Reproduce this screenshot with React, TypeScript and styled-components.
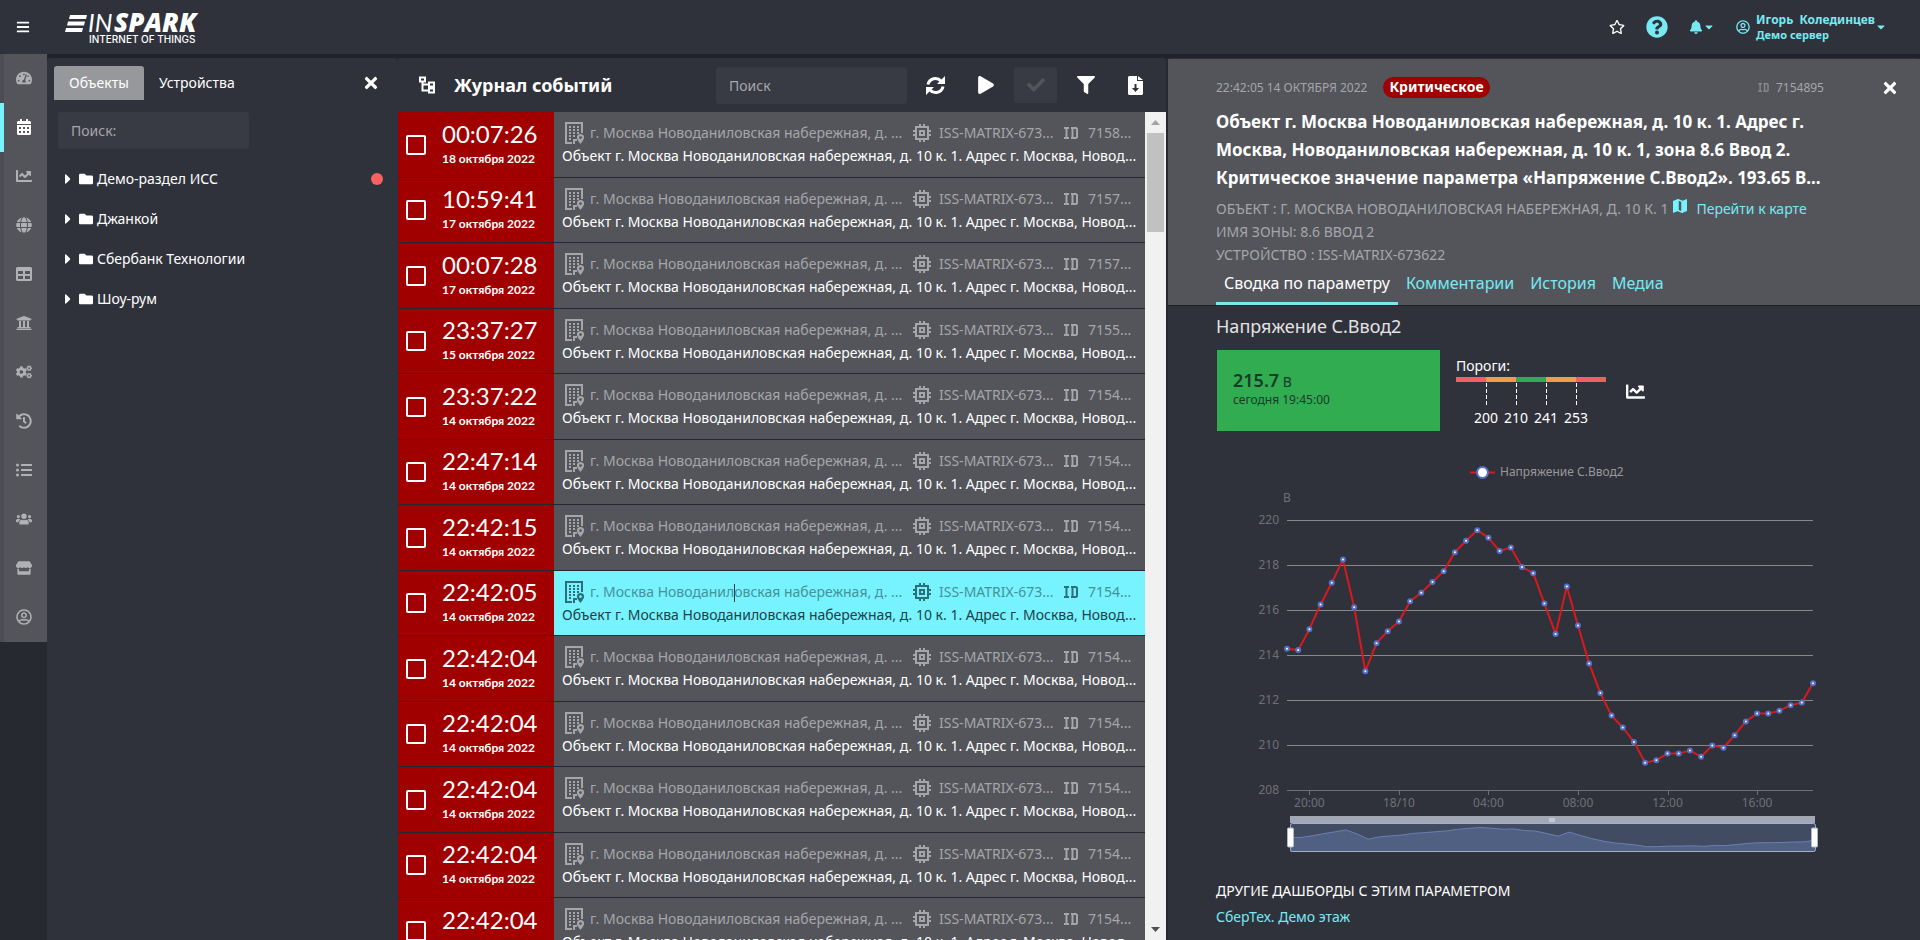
import React from "react";
import styled, { createGlobalStyle, css } from "styled-components";
import {
  FaBars, FaBell, FaCalendarAlt, FaCaretDown, FaCaretRight, FaChartLine, FaCheck, FaCogs, FaFilter, FaFolder,
  FaGlobe, FaHistory, FaListUl, FaPlay, FaQuestionCircle, FaRegStar, FaRegUserCircle, FaStore,
  FaTable, FaTachometerAlt, FaTimes, FaUniversity, FaUsers,
} from "react-icons/fa";

const color = {
  page: "#272930",
  panel: "#30323b",
  line: "#21222b",
  raised: "#53555b",
  field: "#393b44",
  muted: "#a5a6a9",
  accent: "#76e9f2",
  alarm: "#a00000",
};

const Global = createGlobalStyle`
  *, *::before, *::after { box-sizing: border-box; }
  html, body, #root { height: 100%; }
  body {
    margin: 0;
    overflow: hidden;
    background: ${color.page};
    color: #fff;
    font: 14px/20px "Noto Sans", "Open Sans", sans-serif;
  }
  button, input { font: inherit; color: inherit; }
  button { padding: 0; border: 0; background: none; cursor: pointer; }
  a { color: ${color.accent}; text-decoration: none; }
  h1, h2, h3, p, ul { margin: 0; padding: 0; }
  ul { list-style: none; }
  svg { display: block; flex: none; }
`;

const Shell = styled.div`
  display: flex;
  flex-direction: column;
  height: 100%;
`;

const TopBar = styled.header`
  display: flex;
  align-items: center;
  flex: none;
  height: 54px;
  padding: 0 33px 0 16px;
  background: ${color.panel};
`;

const Burger = styled.button`
  display: flex;
  width: 49px;
`;

const TopActions = styled.nav`
  display: flex;
  align-items: center;
  margin-left: auto;
  color: ${color.accent};
`;

const TopButton = styled.button<{ $light?: boolean }>`
  display: flex;
  align-items: center;
  margin-right: 21px;
  color: ${(p) => (p.$light ? "#fff" : "inherit")};
`;

const UserButton = styled.button`
  display: flex;
  align-items: center;
  text-align: left;
`;

const UserText = styled.span`
  margin-left: 6px;
`;

const UserName = styled.span`
  display: block;
  font: 700 12px/15px "Noto Sans", sans-serif;
  white-space: pre;
`;

const ServerName = styled.small`
  display: block;
  font: 700 11px/16px "Noto Sans", sans-serif;
`;

const Columns = styled.div`
  display: grid;
  grid-template-columns: 47px 350px minmax(0, 769fr) 2px minmax(0, 752fr);
  flex: 1;
  min-height: 0;
  background: linear-gradient(${color.line} 4px, ${color.page} 4px);
`;

const Rail = styled.nav`
  align-self: start;
  border-left: 4px solid #4b4d54;
  background: ${color.raised};
`;

const RailButton = styled.button<{ $active?: boolean }>`
  display: flex;
  align-items: center;
  width: 47px;
  height: 49px;
  margin-left: -4px;
  padding: 0 0 2px 12px;
  border-left: 4px solid ${(p) => (p.$active ? "#77f3ff" : "transparent")};
  color: ${(p) => (p.$active ? "#fff" : "#b0b1b4")};
  svg { width: auto; height: 16px; }
`;

const Panel = styled.section`
  display: flex;
  flex-direction: column;
  min-width: 0;
  min-height: 0;
  margin-top: 4px;
  border-radius: 4px 4px 0 0;
  background: ${color.panel};
`;

const TabBar = styled.div`
  display: flex;
  align-items: center;
  padding: 8px 17px 0 7px;
`;

const ObjectTab = styled.button<{ $active?: boolean }>`
  height: 34px;
  padding: 0 15px;
  border-radius: 3px 3px 0 0;
  background: ${(p) => (p.$active ? "#97989c" : "transparent")};
`;

const CloseButton = styled.button`
  display: flex;
  margin-left: auto;
`;

const SearchInput = styled.input`
  width: 191px;
  height: 37px;
  padding: 0 13px;
  border: 0;
  border-radius: 3px;
  background: ${color.field};
  &::placeholder { color: ${color.muted}; opacity: 1; }
`;

const TreeSearch = styled.div`
  padding: 12px 11px 10px;
`;

const TreeItem = styled.li`
  display: flex;
  align-items: center;
  height: 40px;
  padding: 0 14px 0 18px;
`;

const TreeToggle = styled.button`
  display: flex;
  align-items: center;
  gap: 4px;
`;

const Caret = styled(FaCaretRight)`
  width: 6px;
  height: 16px;
  margin-right: 4px;
`;

const AlarmDot = styled.span`
  width: 12px;
  height: 12px;
  margin-left: auto;
  border-radius: 50%;
  background: #f96060;
`;

const JournalHeader = styled.header`
  display: flex;
  align-items: center;
  height: 54px;
  flex: none;
  padding: 0 9px 0 22px;
`;

const JournalTitle = styled.h1`
  flex: 1;
  margin-left: 19px;
  font-size: 18px;
  line-height: 26px;
  white-space: nowrap;
`;

const Tools = styled.div`
  display: flex;
  align-items: center;
  gap: 7px;
  margin-left: 7px;
`;

const ToolButton = styled.button<{ $off?: boolean }>`
  display: flex;
  align-items: center;
  justify-content: center;
  width: 43px;
  height: 36px;
  border-radius: 3px;
  color: ${(p) => (p.$off ? "#53555d" : "#fff")};
  background: ${(p) => (p.$off ? color.field : "transparent")};
`;

const JournalBody = styled.div`
  display: flex;
  flex: 1;
  min-height: 0;
`;

const EventList = styled.ul`
  flex: 1;
  min-width: 0;
  overflow: hidden;
  padding-left: 1px;
`;

const EventRow = styled.li<{ $selected?: boolean }>`
  display: flex;
  height: 65px;
  border-bottom: 1px solid #26272f;
  background: ${(p) => (p.$selected ? "#77f3ff" : color.raised)};
  color: ${(p) => (p.$selected ? "#1c4248" : "#fff")};
  --soft: ${(p) => (p.$selected ? "#469298" : "#a5a6a9")};
  --icon: ${(p) => (p.$selected ? "#2e6f77" : "#a5a6a9")};
  &:nth-child(odd) { height: 66px; }
`;

const Stamp = styled.label`
  display: flex;
  align-items: center;
  flex: none;
  width: 156px;
  padding-left: 8px;
  background: ${color.alarm};
  color: #fff;
`;

const Check = styled.input`
  appearance: none;
  flex: none;
  width: 20px;
  height: 20px;
  margin: 0 16px 0 0;
  border: 2px solid #fff;
  border-radius: 2px;
`;

const Clock = styled.time`
  display: block;
  font: 24px/28px Lato, sans-serif;
`;

const Day = styled.span`
  display: block;
  font: 700 12px/22px Lato, sans-serif;
  white-space: nowrap;
`;

const Summary = styled.div`
  flex: 1;
  min-width: 0;
  padding: 9px 8px 0;
`;

const Facts = styled.div`
  display: flex;
  align-items: center;
  height: 24px;
  padding-left: 3px;
  color: var(--soft);
  svg { color: var(--icon); }
`;

const ellipsis = css`
  overflow: hidden;
  text-overflow: ellipsis;
  white-space: nowrap;
`;

const Place = styled.span`
  flex: 1;
  min-width: 0;
  margin: 0 8px 0 5px;
  ${ellipsis}
`;

const Device = styled.span`
  flex: none;
  width: 118px;
  margin: 0 7px 0 8px;
  ${ellipsis}
`;

const EventId = styled.span`
  flex: none;
  width: 49px;
  margin-left: 10px;
`;

const Message = styled.p`
  line-height: 22px;
  ${ellipsis}
`;

const TextCursor = styled.i`
  display: inline-block;
  width: 1px;
  height: 18px;
  margin-right: -1px;
  background: #1c4248;
  vertical-align: middle;
`;

const ScrollTrack = styled.div`
  display: flex;
  flex-direction: column;
  align-items: center;
  flex: none;
  width: 21px;
  background: #f1f1f1;
`;

const ScrollArrow = styled.button`
  display: flex;
  align-items: center;
  justify-content: center;
  flex: none;
  width: 21px;
  height: 21px;
`;

const ScrollThumb = styled.div`
  width: 17px;
  height: 99px;
  margin-bottom: auto;
  background: #c1c1c1;
`;

const DetailHead = styled.header`
  margin-top: 1px;
  padding: 18px 21px 0 48px;
  background: ${color.raised};
  border-bottom: 1px solid #1f2028;
`;

const DetailTop = styled.div`
  display: flex;
  align-items: center;
  height: 21px;
  font-size: 12px;
  color: ${color.muted};
  svg { color: #85868b; }
`;

const Badge = styled.strong`
  height: 21px;
  margin: 0 auto 0 16px;
  padding: 0 6px;
  border-radius: 11px;
  background: ${color.alarm};
  color: #fff;
  font-size: 14px;
  line-height: 20px;
`;

const DetailId = styled.span`
  display: flex;
  align-items: center;
  gap: 7px;
  margin-right: 57px;
`;

const DetailClose = styled.button`
  display: flex;
  svg { color: #fff; }
`;

const DetailTitle = styled.h2`
  margin: 10px 70px 5px 0;
  font-size: 17px;
  line-height: 28px;
`;

const Meta = styled.p`
  display: flex;
  line-height: 23px;
  color: ${color.muted};
  white-space: nowrap;
`;

const MapLink = styled.a`
  display: flex;
  gap: 9px;
  margin-left: 5px;
  svg { margin-top: 2px; }
`;

const DetailTabs = styled.nav`
  display: flex;
`;

const DetailTab = styled.a<{ $active?: boolean }>`
  height: 39px;
  padding: 5px 8px 0;
  border-bottom: 3px solid ${(p) => (p.$active ? "#77e9f2" : "transparent")};
  font-size: 16px;
  line-height: 24px;
  color: ${(p) => (p.$active ? "#fff" : color.accent)};
`;

const DetailBody = styled.div`
  flex: 1;
  min-height: 0;
  margin-bottom: 2px;
  padding: 7px 96px 0 48px;
  overflow: hidden;
`;

const ParamTitle = styled.h3`
  font-weight: 400;
  font-size: 18px;
  line-height: 26px;
  color: #e2e2e4;
`;

const Reading = styled.div`
  display: flex;
  margin: 11px 0 30px 1px;
`;

const ValueCard = styled.div`
  display: flex;
  flex-direction: column;
  justify-content: center;
  width: 223px;
  height: 81px;
  padding: 0 0 4px 16px;
  background: #32ac51;
  color: #183a2b;
  font-size: 12px;
  line-height: 16px;
`;

const Value = styled.span`
  font-size: 14px;
  line-height: 20px;
  strong { font-size: 18px; font-weight: 600; }
`;

const Limits = styled.div`
  margin: 6px 20px 0 16px;
`;

const LimitBar = styled.div`
  display: flex;
  width: 150px;
  margin-top: 1px;
`;

const Segment = styled.span<{ $tone: string }>`
  width: 30px;
  height: 30px;
  border-top: 5px solid ${(p) => p.$tone};
  & + & { background: repeating-linear-gradient(#fff 0 4px, transparent 4px 6px) left / 1px 100% no-repeat border-box; }
`;

const LimitLabels = styled.div`
  display: flex;
  padding: 1px 0 0 15px;
  span { width: 30px; text-align: center; }
`;

const ChartButton = styled.button`
  align-self: flex-start;
  margin-top: 32px;
`;

const Chart = styled.svg`
  width: 100%;
  height: auto;
  font: 12px "Noto Sans", sans-serif;
  fill: #6e7079;
`;

const Related = styled.section`
  h3 { margin-top: 23px; font-weight: 400; font-size: 14px; line-height: 26px; }
  a { display: block; line-height: 26px; }
`;

const Logo = () => (
  <svg width="140" height="44" viewBox="0 0 140 44" role="img" aria-label="INSPARK Internet of Things" fill="#fff">
    <path d="M5 10h17l-1 4H4zM3 16.500h17l-1 4H2zM1 23h17l-1 4H0z" />
    <text x="23" y="27" fontFamily="Lato" fontSize="25" fontStyle="italic" fontWeight="400">IN</text>
    <text x="49" y="27" fontFamily="Open Sans" fontSize="26" fontStyle="italic" fontWeight="800">SPARK</text>
    <text x="24" y="38" fontFamily="Inter" fontSize="10" fontWeight="500">INTERNET OF THINGS</text>
  </svg>
);

const TreeIcon = () => (
  <svg width="16" height="18" viewBox="0 0 16 18" fill="none" stroke="#fff" strokeWidth="2">
    <path d="M1 1.500h5v4H1zM10 6.500h5v4h-5zM10 12.500h5v4h-5zM3.500 5.500v9H10M3.500 8.500H10" />
  </svg>
);

const BuildingIcon = () => (
  <svg width="20" height="22" viewBox="0 0 20 22" fill="currentColor">
    <path d="M0 0h18v11h-2V2H2v18h5v2H0zM8 17h4v2h-2v3H8z" />
    <path d="M4 4h2v2H4zM8 4h2v2H8zM12 4h2v2h-2zM4 7h2v2H4zM8 7h2v2H8zM12 7h2v2h-2zM4 10h2v2H4zM8 10h2v2H8zM4 13h2v2H4zM8 13h2v2H8zM4 16h2v2H4zM12 10h2v2h-2z" />
    <path fillRule="evenodd" d="M15.500 12a3.600 3.600 0 0 1 3.600 3.600c0 2.500-3.600 6.400-3.600 6.400s-3.600-3.900-3.600-6.400A3.600 3.600 0 0 1 15.500 12zm0 2.200a1.400 1.400 0 1 0 0 2.800 1.400 1.400 0 0 0 0-2.800z" />
  </svg>
);

const ChipIcon = () => (
  <svg width="18" height="18" viewBox="0 0 18 18" fill="none" stroke="currentColor" strokeWidth="2">
    <path d="M3 3h12v12H3zM7 7h4v4H7zM7 0v3M11 0v3M7 15v3M11 15v3M0 7h3M0 11h3M15 7h3M15 11h3" />
  </svg>
);

const IdIcon = ({ size = 14 }: { size?: number }) => (
  <svg width={size} height={size === 14 ? 12 : 9} viewBox="0 0 14 12" fill="none" stroke="currentColor" strokeWidth="2">
    <path d="M0 1h5M2.500 1v10M0 11h5M7 1h5l1 1v8l-1 1H7M8.500 1v10" />
  </svg>
);

const MapIcon = () => (
  <svg width="14" height="14" viewBox="0 0 14 14" fill="#77f3ff">
    <path d="M0 2l5-2v12l-5 2zM9 2l5-2v12l-5 2z" />
    <path d="M5 .700l4 1.500v11L5 11.500z" fill="none" stroke="#77f3ff" strokeWidth="1.500" />
  </svg>
);

const RefreshIcon = () => (
  <svg width="19" height="19" viewBox="0 0 19 19" fill="none" stroke="#fff" strokeWidth="3">
    <path d="M2 8.500a7.500 7.500 0 0 1 13-3.500M17 10.500a7.500 7.500 0 0 1-13 3.500" />
    <path d="M19 0v8h-8zM0 19v-8h8z" fill="#fff" stroke="none" />
  </svg>
);

const DownloadIcon = () => (
  <svg width="15" height="19" viewBox="0 0 15 19" fill="#fff">
    <path fillRule="evenodd" d="M1 0h8v5h6v13l-1 1H1l-1-1V1zM6.500 8v4H4l3.500 4 3.500-4H8.500V8z" />
    <path d="M10 0l5 4h-5z" />
  </svg>
);

const railItems = [
  { name: "Панель", icon: FaTachometerAlt },
  { name: "Журнал", icon: FaCalendarAlt },
  { name: "Графики", icon: FaChartLine },
  { name: "Карта", icon: FaGlobe },
  { name: "Таблица", icon: FaTable },
  { name: "Организации", icon: FaUniversity },
  { name: "Настройки", icon: FaCogs },
  { name: "История", icon: FaHistory },
  { name: "Список", icon: FaListUl },
  { name: "Пользователи", icon: FaUsers },
  { name: "Магазин", icon: FaStore },
  { name: "Профиль", icon: FaRegUserCircle },
];

const treeItems = [
  { name: "Демо-раздел ИСС", alarm: true },
  { name: "Джанкой" },
  { name: "Сбербанк Технологии" },
  { name: "Шоу-рум" },
];

const events = [
  { time: "00:07:26", day: "18 октября 2022", id: "7158..." },
  { time: "10:59:41", day: "17 октября 2022", id: "7157..." },
  { time: "00:07:28", day: "17 октября 2022", id: "7157..." },
  { time: "23:37:27", day: "15 октября 2022", id: "7155..." },
  { time: "23:37:22", day: "14 октября 2022", id: "7154..." },
  { time: "22:47:14", day: "14 октября 2022", id: "7154..." },
  { time: "22:42:15", day: "14 октября 2022", id: "7154..." },
  { time: "22:42:05", day: "14 октября 2022", id: "7154...", selected: true },
  { time: "22:42:04", day: "14 октября 2022", id: "7154..." },
  { time: "22:42:04", day: "14 октября 2022", id: "7154..." },
  { time: "22:42:04", day: "14 октября 2022", id: "7154..." },
  { time: "22:42:04", day: "14 октября 2022", id: "7154..." },
  { time: "22:42:04", day: "14 октября 2022", id: "7154..." },
];

const limitTones = ["#f65f5f", "#ef9c4b", "#32ac51", "#ef9c4b", "#f65f5f"];
const limits = [200, 210, 241, 253];

const readings = [
  214.3, 214.24, 215.17, 216.27, 217.23, 218.27, 216.15, 213.3, 214.55, 215.08, 215.51, 216.41, 216.79, 217.27,
  217.75, 218.59, 219.1, 219.57, 219.23, 218.64, 218.8, 217.93, 217.66, 216.31, 214.96, 217.07, 215.33, 213.64,
  212.33, 211.33, 210.8, 210.16, 209.23, 209.35, 209.64, 209.64, 209.78, 209.5, 210, 209.9, 210.46, 211.07,
  211.42, 211.42, 211.54, 211.79, 211.91, 212.77,
];
const timeTicks = ["20:00", "18/10", "04:00", "08:00", "12:00", "16:00"];

const plotX = (i: number) => 71 + (i * 526) / (readings.length - 1);
const plotY = (v: number) => 59.5 + (220 - v) * 22.5;
const miniX = (i: number) => 74 + (i * 525) / (readings.length - 1);
const miniY = (v: number) => 366.5 + (219.57 - v) * 1.87;

const VoltageChart = () => {
  const line = readings.map((v, i) => `${plotX(i)},${plotY(v)}`).join(" ");
  const mini = readings.map((v, i) => `${miniX(i)},${miniY(v)}`).join(" ");
  return (
    <Chart viewBox="0 0 608 394" role="img" aria-label="Напряжение С.Ввод2">
      <path d="M254 11.500h25" stroke="#d8191e" strokeWidth="2" />
      <circle cx="266.500" cy="11.500" r="5.500" fill="#fff" stroke="#5470c6" strokeWidth="2" />
      <text x="284" y="15" fill="#97989c">Напряжение С.Ввод2</text>
      <text x="71" y="41" textAnchor="middle">В</text>
      {[220, 218, 216, 214, 212, 210, 208].map((v) => (
        <g key={v}>
          <path d={`M71 ${plotY(v)}H597`} stroke={v === 208 ? "#6e7079" : "#85878b"} />
          <text x="63" y={plotY(v) + 3} textAnchor="end">{v}</text>
        </g>
      ))}
      {timeTicks.map((t, i) => (
        <g key={t}>
          <path d={`M${Math.round(plotX(2 + i * 8)) + 0.5} 330v4`} stroke="#6e7079" />
          <text x={plotX(2 + i * 8)} y="346" textAnchor="middle">{t}</text>
        </g>
      ))}
      <polyline points={line} fill="none" stroke="#d8191e" strokeWidth="2" strokeLinejoin="bevel" />
      {readings.map((v, i) => (
        <circle key={i} cx={plotX(i)} cy={plotY(v)} r="2" fill="#fff" stroke="#5470c6" strokeWidth="2" />
      ))}
      <path d="M74 355h525v7H74z" fill="#a1a7b4" />
      <path d="M334 357v4M336 357v4M338 357v4" stroke="#e6e8ee" />
      <path d="M74 362h525v29H74z" fill="#414b62" />
      <polygon points={`74,391 ${mini} 599,391`} fill="#506083" />
      <polyline points={mini} fill="none" stroke="#6a7fb5" />
      <rect x="74.500" y="362.500" width="525" height="28" rx="2" fill="none" stroke="#a3b3cf" />
      <rect x="71.500" y="367" width="6" height="19" rx="1" fill="#fff" stroke="#acb8d1" />
      <rect x="595.500" y="367" width="6" height="19" rx="1" fill="#fff" stroke="#acb8d1" />
    </Chart>
  );
};

export default function App() {
  return (
    <Shell>
      <Global />
      <TopBar>
        <Burger aria-label="Меню"><FaBars size={14} /></Burger>
        <Logo />
        <TopActions>
          <TopButton $light aria-label="Избранное"><FaRegStar size={16} /></TopButton>
          <TopButton aria-label="Помощь"><FaQuestionCircle size={22} /></TopButton>
          <TopButton aria-label="Уведомления"><FaBell size={14} /><FaCaretDown size={12} /></TopButton>
          <UserButton>
            <FaRegUserCircle size={14} />
            <UserText>
              <UserName>{"Игорь  Колединцев"}</UserName>
              <ServerName>Демо сервер</ServerName>
            </UserText>
            <FaCaretDown size={12} />
          </UserButton>
        </TopActions>
      </TopBar>
      <Columns>
        <Rail>
          {railItems.map(({ name, icon: Icon }, i) => (
            <RailButton key={name} aria-label={name} $active={i === 1}><Icon /></RailButton>
          ))}
        </Rail>

        <Panel>
          <TabBar>
            <ObjectTab $active>Объекты</ObjectTab>
            <ObjectTab>Устройства</ObjectTab>
            <CloseButton aria-label="Закрыть"><FaTimes size={18} /></CloseButton>
          </TabBar>
          <TreeSearch>
            <SearchInput aria-label="Поиск объектов" placeholder="Поиск:" />
          </TreeSearch>
          <ul>
            {treeItems.map((item) => (
              <TreeItem key={item.name}>
                <TreeToggle><Caret /><FaFolder size={14} />{item.name}</TreeToggle>
                {item.alarm && <AlarmDot />}
              </TreeItem>
            ))}
          </ul>
        </Panel>

        <Panel>
          <JournalHeader>
            <TreeIcon />
            <JournalTitle>Журнал событий</JournalTitle>
            <SearchInput aria-label="Поиск событий" placeholder="Поиск" />
            <Tools>
              <ToolButton aria-label="Обновить"><RefreshIcon /></ToolButton>
              <ToolButton aria-label="Запустить"><FaPlay size={18} /></ToolButton>
              <ToolButton aria-label="Подтвердить" $off><FaCheck size={18} /></ToolButton>
              <ToolButton aria-label="Фильтр"><FaFilter size={18} /></ToolButton>
              <ToolButton aria-label="Скачать"><DownloadIcon /></ToolButton>
            </Tools>
          </JournalHeader>
          <JournalBody>
            <EventList>
              {events.map((e, i) => (
                <EventRow key={i} $selected={e.selected}>
                  <Stamp>
                    <Check type="checkbox" />
                    <span><Clock>{e.time}</Clock><Day>{e.day}</Day></span>
                  </Stamp>
                  <Summary>
                    <Facts>
                      <BuildingIcon />
                      <Place>
                        г. Москва Новоданил{e.selected && <TextCursor />}овская набережная, д. ...
                      </Place>
                      <ChipIcon />
                      <Device>ISS-MATRIX-673...</Device>
                      <IdIcon />
                      <EventId>{e.id}</EventId>
                    </Facts>
                    <Message>
                      Объект г. Москва Новоданиловская набережная, д. 10 к. 1. Адрес г. Москва, Новод...
                    </Message>
                  </Summary>
                </EventRow>
              ))}
            </EventList>
            <ScrollTrack>
              <ScrollArrow aria-label="Вверх">
                <svg width="9" height="5" viewBox="0 0 9 5" fill="#a3a3a3"><path d="M0 5l4.500-5L9 5z" /></svg>
              </ScrollArrow>
              <ScrollThumb />
              <ScrollArrow aria-label="Вниз">
                <svg width="9" height="5" viewBox="0 0 9 5" fill="#505050"><path d="M0 0h9L4.500 5z" /></svg>
              </ScrollArrow>
            </ScrollTrack>
          </JournalBody>
        </Panel>

        <span />

        <Panel>
          <DetailHead>
            <DetailTop>
              22:42:05 14 ОКТЯБРЯ 2022
              <Badge>Критическое</Badge>
              <DetailId><IdIcon size={11} />7154895</DetailId>
              <DetailClose aria-label="Закрыть"><FaTimes size={18} /></DetailClose>
            </DetailTop>
            <DetailTitle>
              Объект г. Москва Новоданиловская набережная, д. 10 к. 1. Адрес г. Москва, Новоданиловская набережная,
              д. 10 к. 1, зона 8.6 Ввод 2. Критическое значение параметра «Напряжение С.Ввод2». 193.65 В...
            </DetailTitle>
            <Meta>
              ОБЪЕКТ : Г. МОСКВА НОВОДАНИЛОВСКАЯ НАБЕРЕЖНАЯ, Д. 10 К. 1
              <MapLink href="#map"><MapIcon />Перейти к карте</MapLink>
            </Meta>
            <Meta>ИМЯ ЗОНЫ: 8.6 ВВОД 2</Meta>
            <Meta>УСТРОЙСТВО : ISS-MATRIX-673622</Meta>
            <DetailTabs>
              <DetailTab href="#summary" $active>Сводка по параметру</DetailTab>
              <DetailTab href="#comments">Комментарии</DetailTab>
              <DetailTab href="#history">История</DetailTab>
              <DetailTab href="#media">Медиа</DetailTab>
            </DetailTabs>
          </DetailHead>
          <DetailBody>
            <ParamTitle>Напряжение С.Ввод2</ParamTitle>
            <Reading>
              <ValueCard>
                <Value><strong>215.7</strong> В</Value>
                сегодня 19:45:00
              </ValueCard>
              <Limits>
                Пороги:
                <LimitBar>{limitTones.map((tone, i) => <Segment key={i} $tone={tone} />)}</LimitBar>
                <LimitLabels>{limits.map((n) => <span key={n}>{n}</span>)}</LimitLabels>
              </Limits>
              <ChartButton aria-label="Открыть график"><FaChartLine size={19} /></ChartButton>
            </Reading>
            <VoltageChart />
            <Related>
              <h3>ДРУГИЕ ДАШБОРДЫ С ЭТИМ ПАРАМЕТРОМ</h3>
              <a href="#dashboard">СберТех. Демо этаж</a>
            </Related>
          </DetailBody>
        </Panel>
      </Columns>
    </Shell>
  );
}
